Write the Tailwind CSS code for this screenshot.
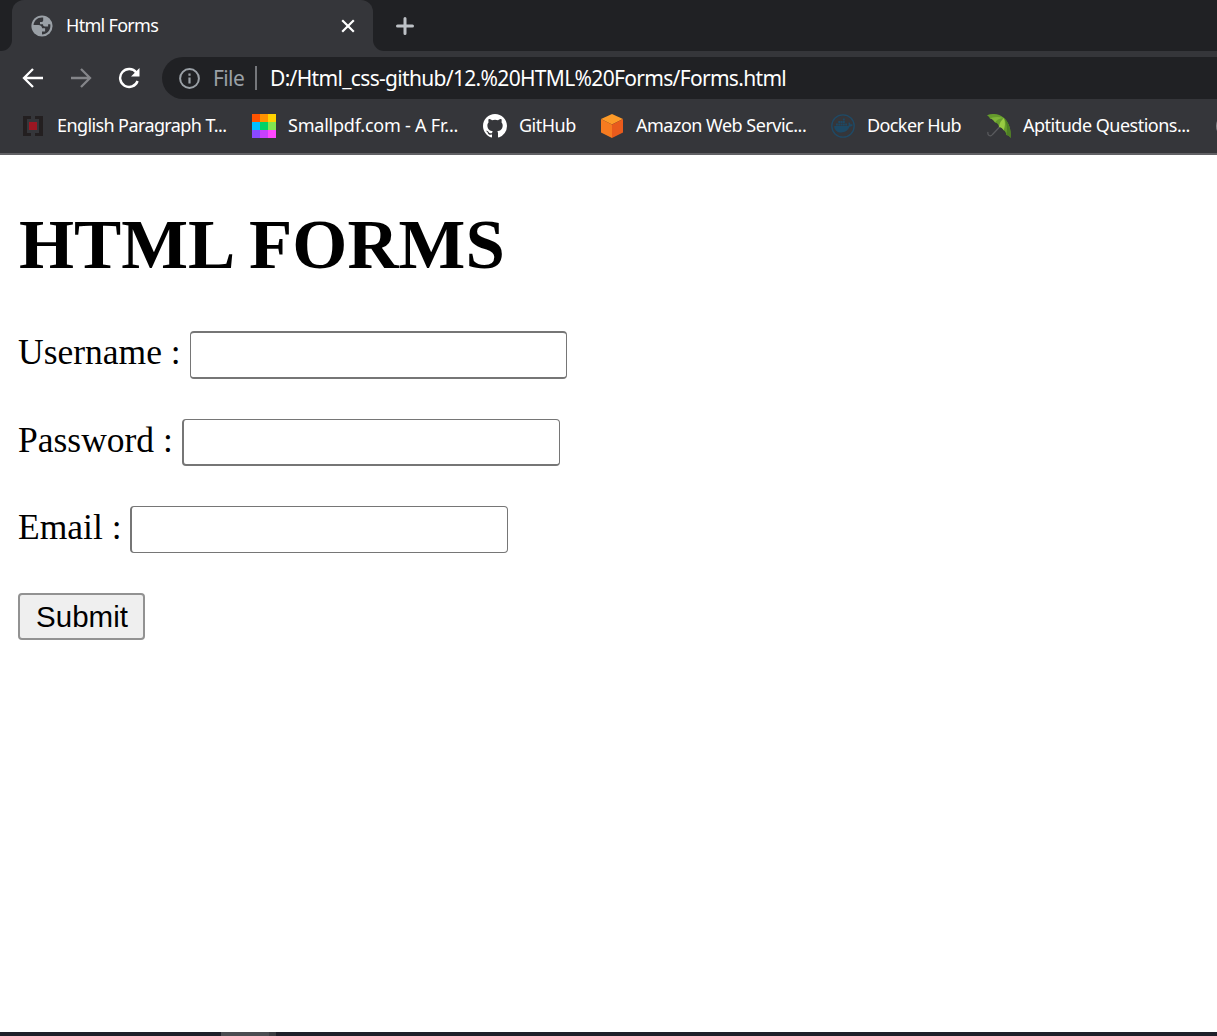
<!DOCTYPE html>
<html lang="en">
<head>
<meta charset="utf-8">
<title>Html Forms</title>
<script src="https://cdn.jsdelivr.net/npm/@tailwindcss/browser@4"></script>
</head>
<body class="flex h-[1036px] w-[1217px] flex-col overflow-hidden bg-white font-['Noto_Sans',sans-serif] text-white">
<header class="flex h-[155px] shrink-0 flex-col border-b-2 border-[#616165] bg-[#35363a]">
  <!-- tab strip -->
  <div class="flex h-[51px] shrink-0">
    <div class="w-3 bg-[#35363a]"><div class="h-full rounded-br-[11px] bg-[#202124]"></div></div>
    <div class="w-[361px] bg-[#202124]">
      <div class="flex h-full items-center rounded-t-[12px] bg-[#35363a] pl-[19px]">
        <svg class="size-[22px]" viewBox="0 0 22 22"><circle cx="11" cy="11" r="10.6" fill="#9aa0a6"/><path d="M12.2 2.6C7 1.8 3 5.600 2.500 10h5c2 0 3.600 1.400 3.600 3.200h3v3.200H11v3c4.500 0 8.400-3.800 8.400-8.400 0-.6 0-1.200-.2-1.700h-2.100v2.100h-3.200c-1 0-1.900-.7-1.900-2.200H9V7h1.600c1.100 0 1.600-.7 1.600-1.700z" fill="#35363a"/></svg>
        <span class="mb-0.5 ml-[13px] w-[263px] text-[18px] leading-6 tracking-[-0.7px] whitespace-nowrap">Html Forms</span>
        <svg class="ml-3 size-[14px]" viewBox="0 0 14 14" stroke="#fff" stroke-width="2.2"><path d="M1.200 1.200l11.600 11.600M12.800 1.200L1.200 12.800"/></svg>
      </div>
    </div>
    <div class="flex-1 bg-[#35363a]"><div class="flex h-full items-center rounded-bl-[11px] bg-[#202124] pl-[22px]">
      <svg class="size-5" viewBox="0 0 20 20" stroke="#bdc1c6" stroke-width="3" stroke-linecap="round"><path d="M10 2.500v15M2.500 10h15"/></svg>
    </div></div>
  </div>
  <!-- navigation row -->
  <div class="flex h-[54px] shrink-0 items-center pl-[22px]">
    <svg class="size-[22px]" viewBox="0 0 22 22" fill="none" stroke="#fff" stroke-width="2.300"><path d="M21 11H2.500M11 2L2 11l9 9"/></svg>
    <svg class="ml-[26px] size-[22px]" viewBox="0 0 22 22" fill="none" stroke="#848589" stroke-width="2.300"><path d="M1 11h18.500M11 2l9 9-9 9"/></svg>
    <svg class="ml-[26px] size-[22px]" viewBox="0 0 22 22" fill="none"><path d="M18.300 5.500A9 9 0 1 0 19.600 14" stroke="#fff" stroke-width="2.400"/><path d="M21.500 1v8.500H13z" fill="#fff"/></svg>
    <div class="ml-[22px] flex h-[42px] flex-1 items-center rounded-l-full bg-[#202124] pl-4">
      <svg class="mt-px size-[22px]" viewBox="0 0 22 22" fill="none" stroke="#9aa0a6"><circle cx="11.500" cy="10.500" r="9.400" stroke-width="2"/><path d="M11.500 9.500v6M11.500 5.500v2.200" stroke-width="2.200"/></svg>
      <span class="ml-[13px] w-[31px] text-[21px] leading-7 tracking-[-0.6px] text-[#9aa0a6]">File</span>
      <i class="ml-[11px] h-6 w-[2px] bg-[#75777b]"></i>
      <span class="ml-[13px] text-[21px] leading-7 tracking-[-0.68px] whitespace-nowrap">D:/Html_css-github/12.%20HTML%20Forms/Forms.html</span>
    </div>
  </div>
  <!-- bookmarks bar -->
  <nav class="flex h-[42px] shrink-0 items-center text-[18px] leading-6 tracking-[-0.5px] whitespace-nowrap">
    <div class="flex w-[252px] shrink-0 items-center pl-[23px]">
      <svg class="size-5" viewBox="0 0 20 20"><path d="M0 0h8v3H4v14h4v3H0zM12 0h8v20h-8v-3h4V3h-4z" fill="#231f20"/><path d="M6 6h8v8H6z" fill="#9b1722"/></svg>
      <span class="mb-0.5 ml-[14px] tracking-[-0.6px]">English Paragraph T...</span>
    </div>
    <div class="flex w-[231px] shrink-0 items-center">
      <svg class="size-6" viewBox="0 0 24 24" shape-rendering="crispEdges"><path fill="#ff5300" d="M0 0h8v8H0z"/><path fill="#ff9200" d="M8 0h8v8H8z"/><path fill="#ffd200" d="M16 0h8v8h-8z"/><path fill="#00bfff" d="M0 8h8v8H0z"/><path fill="#00d267" d="M8 8h8v8H8z"/><path fill="#82e650" d="M16 8h8v8h-8z"/><path fill="#8a48ff" d="M0 16h8v8H0z"/><path fill="#c840ff" d="M8 16h8v8H8z"/><path fill="#ff48ff" d="M16 16h8v8h-8z"/></svg>
      <span class="mb-0.5 ml-3 tracking-[-0.22px]">Smallpdf.com - A Fr...</span>
    </div>
    <div class="flex w-[117px] shrink-0 items-center">
      <svg class="size-6" viewBox="0 0 16 16" fill="#fff"><path d="M8 0C3.580 0 0 3.580 0 8c0 3.540 2.290 6.530 5.470 7.590.4.070.55-.17.55-.38 0-.19-.01-.82-.01-1.490-2.010.37-2.530-.49-2.690-.94-.09-.23-.48-.94-.82-1.130-.28-.15-.68-.52-.01-.53.630-.01 1.080.58 1.230.82.720 1.210 1.870.87 2.330.66.070-.52.280-.87.510-1.070-1.780-.2-3.640-.89-3.640-3.950 0-.87.310-1.590.82-2.150-.08-.2-.36-1.020.08-2.120 0 0 .67-.21 2.200.82a7.600 7.600 0 0 1 4 0c1.530-1.040 2.200-.82 2.200-.82.440 1.100.160 1.920.080 2.120.510.56.820 1.270.82 2.150 0 3.070-1.870 3.750-3.650 3.950.290.25.540.73.540 1.480 0 1.070-.01 1.930-.01 2.200 0 .21.150.46.550.38A8 8 0 0 0 16 8c0-4.420-3.580-8-8-8z"/></svg>
      <span class="mb-0.5 ml-3">GitHub</span>
    </div>
    <div class="flex w-[231px] shrink-0 items-center">
      <svg class="size-6" viewBox="0 0 24 24"><path d="M12 0l11 5-11 5.500L1 5z" fill="#fd9a28"/><path d="M1 5l11 5.500V24L1 18.500z" fill="#f67b20"/><path d="M23 5l-11 5.500V24l11-5.500z" fill="#e95b1c"/></svg>
      <span class="mb-0.5 ml-3">Amazon Web Servic...</span>
    </div>
    <div class="flex w-[156px] shrink-0 items-center">
      <svg class="size-6" viewBox="0 0 24 24" fill="#1d4965"><circle cx="12" cy="12" r="11.200" fill="none" stroke="#1f4a66" stroke-width="1.300"/><path d="M3.200 12h14c.7-.7.700-2 .1-2.900l.8-.9c.9.600 1.300 1.400 1.400 2.200.9-.1 1.700 0 2.300.5-.5 1.200-1.600 1.700-3 1.700-1.700 3.900-4.600 6-8.500 6-4.400 0-7.100-2.600-7.100-6.600z"/><path d="M5 9.400h1.900v2H5zm2.300 0h1.900v2H7.300zm2.300 0h1.900v2H9.600zm2.300 0h1.900v2h-1.900zm2.300 0h1.900v2h-1.900zM7.300 7h1.900v2H7.300zm2.300 0h1.900v2H9.600zm2.300 0h1.900v2h-1.900zm0-2.400h1.900v2h-1.900z"/></svg>
      <span class="mb-0.5 ml-3 tracking-[-0.6px]">Docker Hub</span>
    </div>
    <div class="flex w-[229px] shrink-0 items-center">
      <svg class="size-6" viewBox="0 0 24 24"><path d="M13 12.500L5.500 20.500C3.500 23 .2 21.500 1 18" fill="none" stroke="#5a5b5e" stroke-width="1.200"/><path d="M0 1.200C6-1 12-.3 17 4c5 4.600 7.500 12 6.500 20-.9-1.700-2.300-3-4.300-3 0-2-.9-3.900-2.600-4.800-.9-1.900-2.500-3.100-4.600-3.200-.3-2.300-1.800-3.900-3.900-4.400C6.900 6.200 5 4.800 2.800 4.600 2.600 3.100 1.400 2 0 1.200z" fill="#659b2c"/><path d="M2.800 4.600C5 3 11 2 17 4c-5 .5-8 2.300-8.900 4.600C6.900 6.200 5 4.800 2.800 4.600z" fill="#7fb53a"/><path d="M17 4c-2.500 2-4.800 5.300-5 9 2.100.1 3.700 1.300 4.600 3.200C18.200 13 18.500 8 17 4z" fill="#99cb42"/><path d="M17 4c3.300 5.500 3.500 12 2.200 17 2 0 3.400 1.300 4.300 3C24.500 16 22 8.600 17 4z" fill="#4e7f24"/></svg>
      <span class="mb-0.5 ml-3">Aptitude Questions...</span>
    </div>
    <i class="size-6 shrink-0 rounded-full bg-[#85868a]"></i>
  </nav>
</header>
<main class="flex-1 bg-white pt-[49px] pl-[18px] font-['Liberation_Serif',serif] text-[35.5px] leading-[42px] text-black">
  <h1 class="mb-[47px] h-20 pl-px text-[70.8px] leading-[81px] font-bold">HTML FORMS</h1>
  <form>
    <div class="mb-10 flex h-12"><label for="u" class="w-[172px]">Username :</label><input id="u" class="h-12 w-[377px] rounded-[4px] border border-y-2 border-[#767676] bg-white"></div>
    <div class="mb-10 flex h-[47px]"><label for="p" class="w-[164px]">Password :</label><input id="p" type="password" class="h-[47px] w-[378px] rounded-[4px] border-2 border-t border-r border-[#767676] bg-white"></div>
    <div class="mb-10 flex h-[47px]"><label for="e" class="w-[112px]">Email :</label><input id="e" class="h-[47px] w-[378px] rounded-[4px] border border-l-2 border-[#767676] bg-white"></div>
    <button type="button" class="block h-[47px] w-[127px] rounded-[4px] border-2 border-[#929292] bg-[#efefef] pl-px font-['Liberation_Sans',sans-serif] text-[29.5px] leading-[43px]">Submit</button>
  </form>
</main>
<footer class="flex h-1 shrink-0 bg-[#1e1f29]"><i class="ml-[221px] h-full w-12 bg-[#4b4c51]"></i><i class="h-full w-[7px] bg-[#3b3c41]"></i></footer>
</body>
</html>
